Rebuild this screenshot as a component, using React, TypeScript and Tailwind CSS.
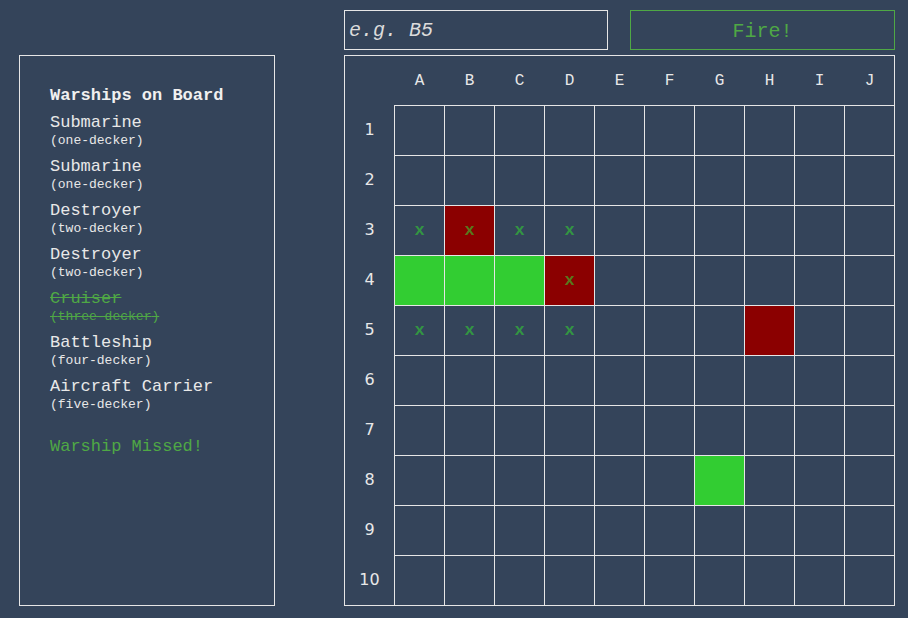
import React from 'react';

const COLS = ['A', 'B', 'C', 'D', 'E', 'F', 'G', 'H', 'I', 'J'];
const ROWS = [1, 2, 3, 4, 5, 6, 7, 8, 9, 10];

type CellState = 'miss' | 'hit' | 'sunk' | 'dead';

// board state keyed by "B3"
const board: Record<string, CellState> = {
  A3: 'miss', B3: 'hit', C3: 'miss', D3: 'miss',
  A4: 'sunk', B4: 'sunk', C4: 'sunk', D4: 'hit',
  A5: 'miss', B5: 'miss', C5: 'miss', D5: 'miss',
  H5: 'dead',
  G8: 'sunk',
};

const ships = [
  { name: 'Submarine', size: 'one-decker', sunk: false },
  { name: 'Submarine', size: 'one-decker', sunk: false },
  { name: 'Destroyer', size: 'two-decker', sunk: false },
  { name: 'Destroyer', size: 'two-decker', sunk: false },
  { name: 'Cruiser', size: 'three-decker', sunk: true },
  { name: 'Battleship', size: 'four-decker', sunk: false },
  { name: 'Aircraft Carrier', size: 'five-decker', sunk: false },
];

const mono = { fontFamily: '"Liberation Mono", "Courier New", monospace' };

const Cell: React.FC<{ id: string }> = ({ id }) => {
  const state = board[id];
  let bg = '';
  let mark = false;
  if (state === 'miss') mark = true;
  if (state === 'hit') { bg = 'bg-[#8b0000]'; mark = true; }
  if (state === 'sunk') bg = 'bg-[#32cd32]';
  if (state === 'dead') bg = 'bg-[#8b0000]';
  return (
    <div className={`border-l border-t border-[#e6e6e6] flex items-center justify-center ${bg}`}>
      {mark && <span className="text-[17px] text-[#32cd32]/60 font-bold leading-none">x</span>}
    </div>
  );
};

export default function App() {
  return (
    <div className="min-h-[618px] bg-[#34445a] text-[#e8e8e8] pl-[19px] pt-[10px]" style={mono}>
      <div className="grid grid-cols-[256px_551px] grid-rows-[40px_551px] gap-x-[69px] gap-y-[5px]">
        <div />
        <div className="flex gap-[22px]">
          <input
            placeholder="e.g. B5"
            className="w-[264px] h-[40px] bg-transparent border border-[#e6e6e6] px-[4px] text-[20px] italic text-[#e8e8e8] placeholder:text-[#dcdcdc] outline-none"
            style={mono}
          />
          <button
            className="w-[265px] h-[40px] border border-[#4fa845] text-[#4fa845] text-[20px] pt-[3px]"
            style={mono}
          >
            Fire!
          </button>
        </div>

        <div className="border border-[#e6e6e6] pl-[30px] pt-[30px]">
          <h2 className="text-[17px] leading-[20px] font-bold text-[#f0f0f0] mb-[6px]">Warships on Board</h2>
          {ships.map((s, i) => (
            <div
              key={i}
              className={`mb-[7px] ${s.sunk ? 'line-through text-[#4fa845]' : 'text-[#e8e8e8]'}`}
            >
              <div className="text-[17px] leading-[21px]">{s.name}{s.sunk ? ' ' : ''}</div>
              <div className="text-[13px] leading-[16px]">({s.size})</div>
            </div>
          ))}
          <p className="mt-[24px] text-[17px] leading-[20px] text-[#4fa845]">Warship Missed!</p>
        </div>

        <div className="border border-[#e6e6e6] grid grid-cols-[49px_repeat(10,50px)] grid-rows-[49px_repeat(10,50px)]">
          <div />
          {COLS.map((c) => (
            <div key={c} className="flex items-center justify-center text-[16px] pl-[1px]">
              {c}
            </div>
          ))}
          {ROWS.map((r) => (
            <React.Fragment key={r}>
              <div
                className="flex items-center justify-center text-[16px] pb-[1px]"
                style={{ fontFamily: '"DejaVu Sans", Verdana, sans-serif' }}
              >
                {r}
              </div>
              {COLS.map((c) => (
                <Cell key={c + r} id={c + r} />
              ))}
            </React.Fragment>
          ))}
        </div>
      </div>
    </div>
  );
}
